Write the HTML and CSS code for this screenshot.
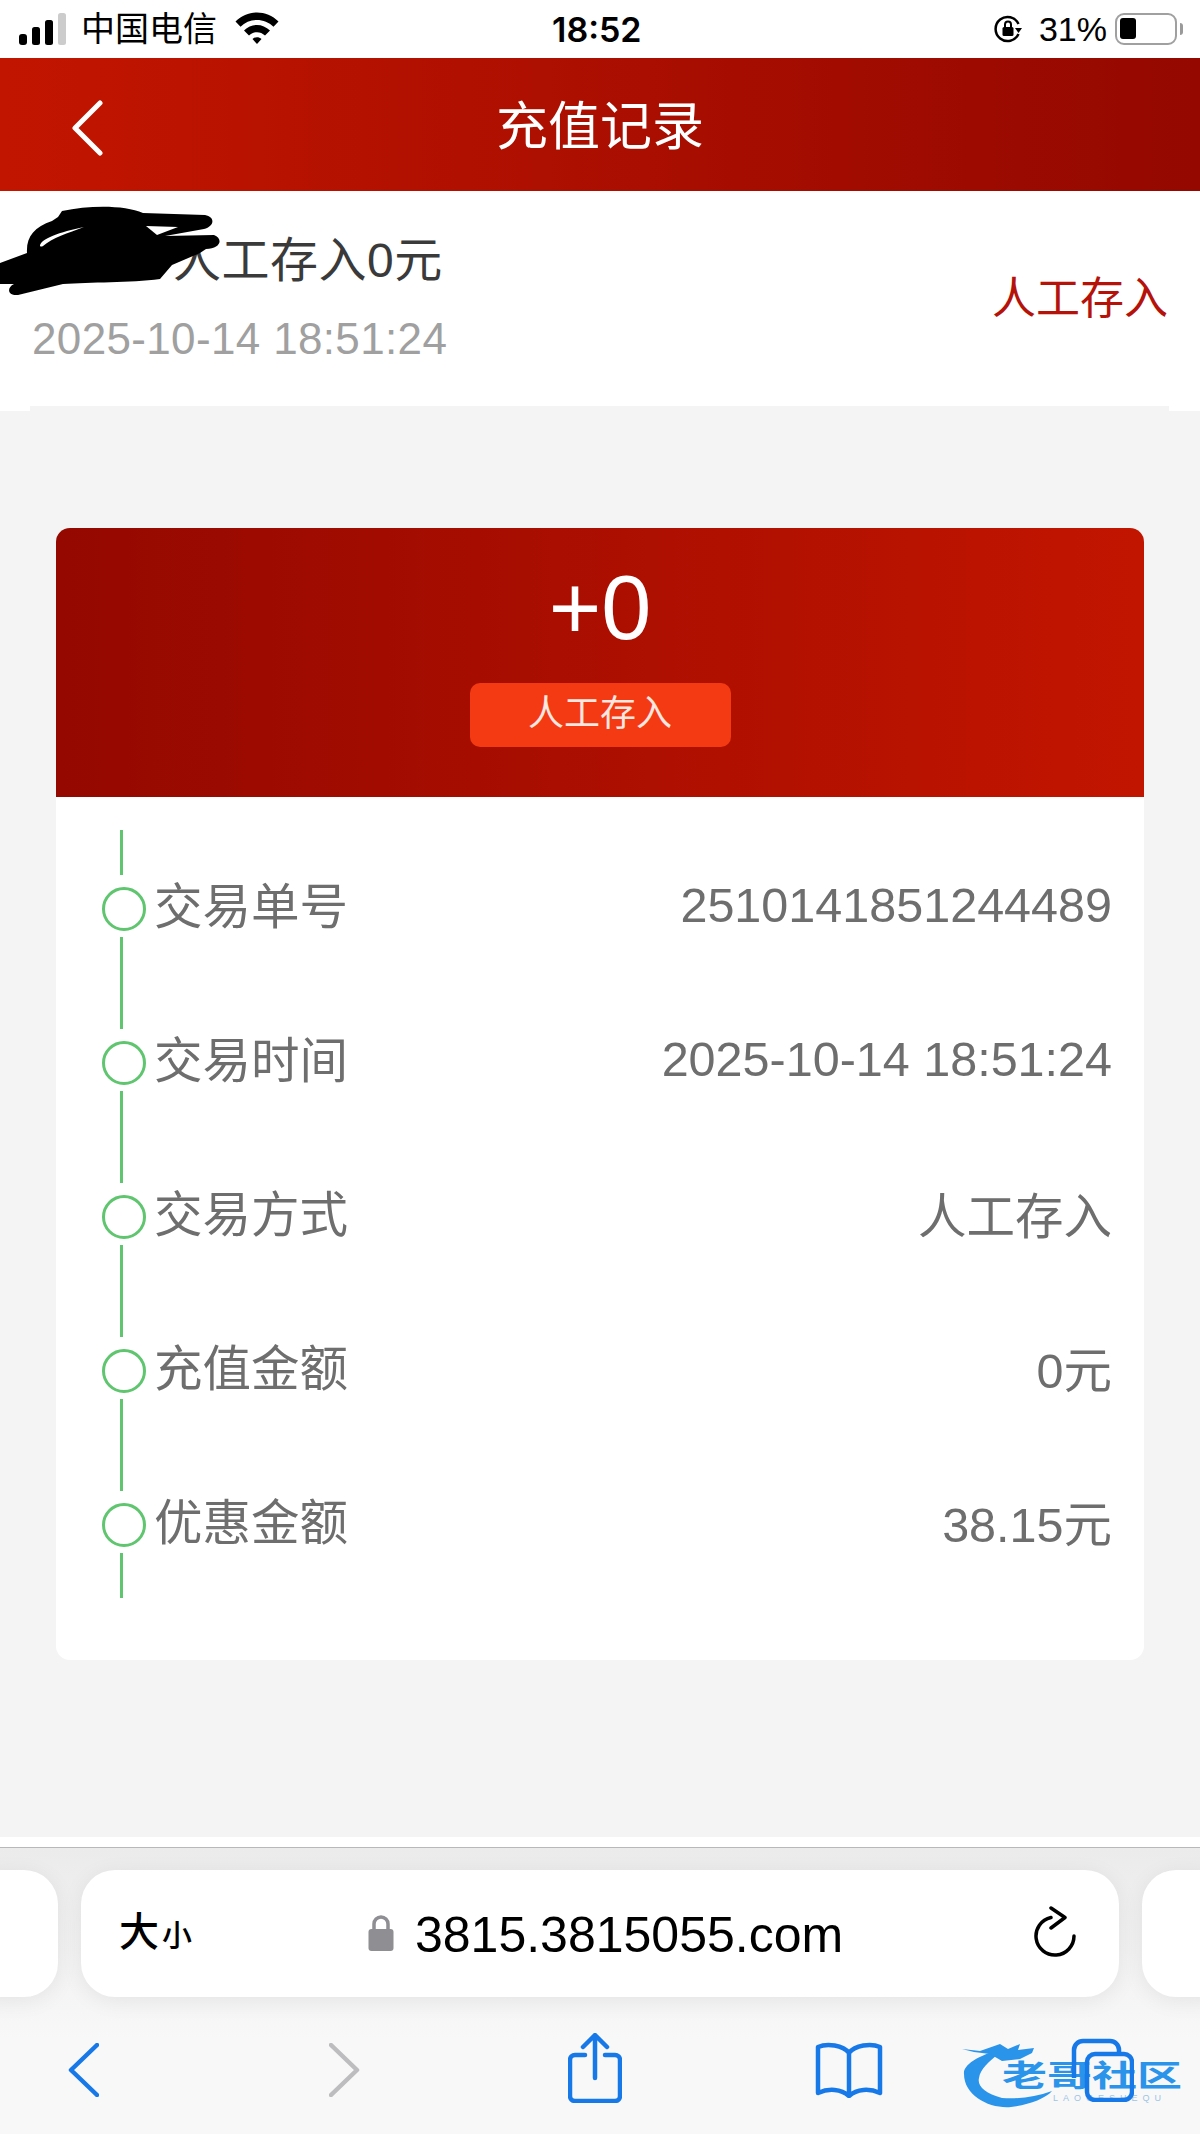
FILE: index.html

```html
<!DOCTYPE html>
<html>
<head>
    <title>充值记录</title>
    <meta http-equiv="Content-Type" content="text/html;charset=UTF-8"/>
    <link rel="stylesheet" href="styles.css">
</head>
<body>
<div class="status-bar">
    <div class="status-left">
        <svg class="signal" width="52" height="34" viewBox="0 0 52 34">
            <rect x="1" y="22" width="8" height="11" rx="3" fill="#000"/>
            <rect x="14" y="15" width="8" height="18" rx="2.500" fill="#000"/>
            <rect x="27" y="8" width="8" height="25" rx="2.500" fill="#000"/>
            <rect x="40" y="1" width="8" height="32" rx="2.500" fill="#ccc"/>
        </svg>
        <span class="carrier">中国电信</span>
        <svg class="wifi" width="44" height="32" viewBox="0 0 44 32">
            <path d="M0.500 9.500C12.500 -2.500 31.500 -2.500 43.500 9.500L38.500 14.800C29.500 5.800 14.500 5.800 5.500 14.800Z" fill="#000"/>
            <path d="M9 18.500C16.500 11 27.500 11 35 18.500L30 23.500C25.500 19 18.500 19 14 23.500Z" fill="#000"/>
            <path d="M17.500 27C20 24.500 24 24.500 26.500 27L22 32Z" fill="#000"/>
        </svg>
    </div>
    <div class="status-time">18:52</div>
    <div class="status-right">
        <svg width="30" height="30" viewBox="0 0 30 30">
            <path d="M25.500 20A12 12 0 1 1 25.500 10" fill="none" stroke="#000" stroke-width="2.500"/>
            <path d="M22 14h7l-3.500 5z" fill="#000"/>
            <rect x="9.500" y="13" width="11" height="9" rx="1.500" fill="#000"/>
            <path d="M12 13v-2.500a3 3 0 0 1 6 0V13" fill="none" stroke="#000" stroke-width="2"/>
        </svg>
        <span class="battery-text">31%</span>
        <div class="battery"><div class="battery-level"></div></div>
        <div class="battery-cap"></div>
    </div>
</div>

<div class="nav-bar">
    <svg class="nav-back" width="32" height="56" viewBox="0 0 32 56">
        <path d="M29 3L4 28L29 53" fill="none" stroke="#fff" stroke-width="5" stroke-linecap="round" stroke-linejoin="round"/>
    </svg>
    <span class="nav-title">充值记录</span>
</div>

<div class="record-row">
    <div class="record-inner">
        <div class="record-left">
            <div class="record-title"><span class="record-mark"></span>人工存入0元</div>
            <div class="record-time">2025-10-14 18:51:24</div>
        </div>
        <div class="record-type">人工存入</div>
    </div>
    <svg class="scribble" width="224" height="106" viewBox="0 0 224 106">
        <path d="M62 20C90 14 125 14 143 22L205 24C216 26 214 36 204 38L165 45L214 44C224 48 220 58 206 58L200 62L172 74L160 88C130 92 90 91 63 93L18 104C8 105 6 97 14 93L0 93L0 72L27 62C26 46 34 36 52 30L58 26Z" fill="#000"/>
        <path d="M40 55C40 48 60 41 84 36C68 42 52 47 43 55Q41 56 40 55Z" fill="#fff"/>
        <path d="M146 35L178 36L157 44Z" fill="#fff"/>
    </svg>
</div>

<div class="page-body">
    <div class="detail-card">
        <div class="detail-head">
            <div class="detail-amount">+0</div>
            <div class="detail-tag">人工存入</div>
        </div>
        <div class="detail-list">
            <div class="line-piece line-end"></div>
            <div class="detail-item">
                <div class="dot"></div>
                <span class="item-label">交易单号</span>
                <span class="item-value">2510141851244489</span>
            </div>
            <div class="line-piece"></div>
            <div class="detail-item">
                <div class="dot"></div>
                <span class="item-label">交易时间</span>
                <span class="item-value">2025-10-14 18:51:24</span>
            </div>
            <div class="line-piece"></div>
            <div class="detail-item">
                <div class="dot"></div>
                <span class="item-label">交易方式</span>
                <span class="item-value">人工存入</span>
            </div>
            <div class="line-piece"></div>
            <div class="detail-item">
                <div class="dot"></div>
                <span class="item-label">充值金额</span>
                <span class="item-value">0元</span>
            </div>
            <div class="line-piece"></div>
            <div class="detail-item">
                <div class="dot"></div>
                <span class="item-label">优惠金额</span>
                <span class="item-value">38.15元</span>
            </div>
            <div class="line-piece line-end"></div>
        </div>
    </div>
</div>

<div class="browser-bar">
    <div class="url-row">
        <div class="tab-side"></div>
        <div class="url-box">
            <div class="url-aa">大<span class="url-aa-small">小</span></div>
            <div class="url-center">
                <svg class="url-lock" width="26" height="38" viewBox="0 0 26 38">
                    <path d="M6 17V10a7 7 0 0 1 14 0v7" fill="none" stroke="#8e8e93" stroke-width="3.500"/>
                    <rect x="0.500" y="15" width="25" height="22" rx="3" fill="#8e8e93"/>
                </svg>
                <span class="url-text">3815.3815055.com</span>
            </div>
            <svg class="url-reload" width="42" height="54" viewBox="0 0 42 54">
                <path d="M17 11.500A19 19 0 1 0 40 30" fill="none" stroke="#000" stroke-width="3.500" stroke-linecap="round"/>
                <path d="M17 2L31 11.500L17 22" fill="none" stroke="#000" stroke-width="3.500" stroke-linecap="round" stroke-linejoin="round"/>
            </svg>
        </div>
        <div class="tab-side"></div>
    </div>
    <div class="watermark">
        <svg class="watermark-logo" width="100" height="72" viewBox="0 0 100 72">
            <path d="M45 7C15 15 3 25 4 33C4 55 30 68 51 66C68 64 85 58 92 50C75 56 60 58 42 57C25 52 17 45 19 37C20 28 30 20 38 13Z" fill="#2a93ea"/>
            <path d="M2 8L20 10L40 3L48 8L60 3L58 9L74 7L72 12L60 18L42 20L30 13L14 11Z" fill="#2a93ea"/>
        </svg>
        <div class="watermark-text">老哥社区</div>
        <div class="watermark-sub">LAOGESHEQU</div>
    </div>
    <div class="tool-row">
        <svg class="tool-back" width="31" height="54" viewBox="0 0 31 54">
            <path d="M29 2L3 27L29 52" fill="none" stroke="#1778e8" stroke-width="4.500" stroke-linecap="round" stroke-linejoin="round"/>
        </svg>
        <svg class="tool-forward" width="31" height="54" viewBox="0 0 31 54">
            <path d="M2 2L28 27L2 52" fill="none" stroke="#bdbdbf" stroke-width="4.500" stroke-linecap="round" stroke-linejoin="round"/>
        </svg>
        <svg class="tool-share" width="54" height="70" viewBox="0 0 54 70">
            <path d="M17 22H7a5 5 0 0 0-5 5v36a5 5 0 0 0 5 5h40a5 5 0 0 0 5-5V27a5 5 0 0 0-5-5H37" fill="none" stroke="#1778e8" stroke-width="4.500" stroke-linecap="round"/>
            <path d="M27 45V3M15 14L27 2L39 14" fill="none" stroke="#1778e8" stroke-width="4.500" stroke-linecap="round" stroke-linejoin="round"/>
        </svg>
        <svg class="tool-book" width="68" height="56" viewBox="0 0 68 56">
            <path d="M34 11C28 3 12 1 3 5V51C14 46 26 47 34 54C42 47 54 46 65 51V5C56 1 40 3 34 11ZM34 11V54" fill="none" stroke="#1778e8" stroke-width="4.500" stroke-linejoin="round"/>
        </svg>
        <svg class="tool-tabs" width="63" height="64" viewBox="0 0 63 64">
            <path d="M3 40V12a9 9 0 0 1 9-9h27a9 9 0 0 1 9 9v3" fill="none" stroke="#1778e8" stroke-width="4.500"/>
            <rect x="16" y="16" width="45" height="46" rx="8" fill="none" stroke="#1778e8" stroke-width="4.500"/>
        </svg>
    </div>
</div>
</body>
</html>
```

FILE: styles.css

```css
* {
    box-sizing: border-box;
}

html, body {
    margin: 0;
    padding: 0;
}

body {
    width: 1200px;
    height: 2134px;
    overflow: hidden;
    display: flex;
    flex-direction: column;
    background-color: #f4f4f4;
    font-family: "Liberation Sans", "Noto Sans CJK SC", sans-serif;
}

/* status bar */
.status-bar {
    height: 58px;
    flex-shrink: 0;
    background-color: #fff;
    display: flex;
    align-items: center;
    justify-content: space-between;
    padding: 0 17px 0 18px;
    position: relative;
    color: #000;
}

.status-left {
    display: flex;
    align-items: center;
}

.signal {
    margin-right: 11px;
}

.carrier {
    font-size: 34px;
    line-height: 40px;
    margin-right: 18px;
}

.wifi {
    margin-bottom: 2px;
}

.status-time {
    font-family: Inter, "Liberation Sans", sans-serif;
    font-size: 34px;
    font-weight: 600;
    position: absolute;
    left: 552px;
    top: 11px;
    line-height: 38px;
}

.status-right {
    display: flex;
    align-items: center;
}

.battery-text {
    font-size: 34px;
    margin: 0 8px 0 16px;
}

.battery {
    width: 62px;
    height: 32px;
    border: 2.500px solid #a0a0a0;
    border-radius: 9px;
    padding: 3px;
}

.battery-level {
    width: 16px;
    height: 21px;
    background-color: #000;
    border-radius: 3px;
}

.battery-cap {
    width: 3px;
    height: 12px;
    margin-left: 3px;
    background-color: #9a9a9a;
    border-radius: 0 3px 3px 0;
}

/* red title bar */
.nav-bar {
    height: 133px;
    flex-shrink: 0;
    background: linear-gradient(90deg, #c21500, #940800);
    display: flex;
    align-items: center;
    justify-content: center;
    position: relative;
}

.nav-back {
    position: absolute;
    left: 71px;
    top: 42px;
}

.nav-title {
    font-size: 52px;
    color: #fff;
    line-height: 60px;
    margin-top: 4px;
}

/* record row */
.record-row {
    height: 220px;
    flex-shrink: 0;
    background-color: #fff;
    padding: 0 31px 0 30px;
    position: relative;
}

.record-inner {
    height: 220px;
    border-bottom: 5px solid #f4f4f4;
    display: flex;
    justify-content: space-between;
    align-items: center;
    padding: 0 1px 0 2px;
}

.record-left {
    align-self: flex-start;
    display: flex;
    flex-direction: column;
}

.record-title {
    font-size: 48px;
    line-height: 60px;
    letter-spacing: 0.500px;
    color: #3a3a3a;
    display: flex;
    margin-top: 40px;
}

.record-mark {
    width: 13px;
    height: 5px;
    margin: 41px 24px 0 104px;
    background-color: #b5120a;
}

.record-time {
    font-size: 44px;
    line-height: 50px;
    letter-spacing: 0.350px;
    color: #a0a0a0;
    margin-top: 23px;
}

.record-type {
    font-size: 44px;
    color: #b5120a;
    margin-bottom: 8px;
}

.scribble {
    position: absolute;
    left: 0;
    top: 0;
}

/* detail card */
.page-body {
    flex: 1;
    padding: 117px 56px 0 56px;
}

.detail-card {
    height: 1132px;
    border-radius: 14px;
    overflow: hidden;
    background-color: #fff;
}

.detail-head {
    height: 269px;
    background: linear-gradient(90deg, #940800, #c21500);
    display: flex;
    flex-direction: column;
    align-items: center;
}

.detail-amount {
    font-size: 90px;
    line-height: 92px;
    color: #fff;
    margin-top: 34px;
}

.detail-tag {
    width: 261px;
    height: 64px;
    margin-top: 29px;
    background-color: #f43a12;
    border-radius: 10px;
    color: #fde7e0;
    font-size: 36px;
    line-height: 62px;
    text-align: center;
}

.detail-list {
    padding: 33px 32px 0 46px;
}

.line-piece {
    width: 3px;
    height: 92px;
    margin-left: 18px;
    background-color: #5fc56f;
}

.line-end {
    height: 45px;
}

.detail-item {
    height: 62px;
    display: flex;
    align-items: center;
}

.dot {
    width: 44px;
    height: 44px;
    margin-top: 6px;
    margin-right: 8px;
    border: 3px solid #5fc56f;
    border-radius: 50%;
    flex-shrink: 0;
}

.item-label {
    font-size: 48.500px;
    color: #6e6e6e;
    flex: 1;
    margin-bottom: 6px;
}

.item-value {
    font-size: 48.500px;
    color: #6e6e6e;
    margin-bottom: 2px;
}

/* safari toolbar */
.browser-bar {
    height: 287px;
    flex-shrink: 0;
    position: relative;
    background-color: #f8f8f9;
    background-image: linear-gradient(180deg, #ebebec, #f8f8f9 67%);
    box-shadow: 0 -10px 0 #fff;
    border-top: 1px solid #b8b8ba;
}

.url-row {
    display: flex;
    justify-content: space-between;
    gap: 23px;
    margin: 22px -38px 0 -38px;
    height: 127px;
}

.tab-side {
    width: 96px;
    border-radius: 34px;
    background-color: #fff;
    box-shadow: 0 4px 22px rgba(0, 0, 0, .07);
}

.url-box {
    flex: 1;
    border-radius: 34px;
    background-color: #fff;
    box-shadow: 0 4px 22px rgba(0, 0, 0, .07);
    display: flex;
    align-items: center;
    position: relative;
}

.url-aa {
    font-size: 40px;
    font-weight: 500;
    line-height: 50px;
    margin-left: 38px;
    color: #000;
}

.url-aa-small {
    font-size: 30px;
    margin-left: 3px;
}

.url-center {
    position: absolute;
    left: 287px;
    top: 42px;
    display: flex;
    align-items: center;
    gap: 21px;
}

.url-lock {
    margin-top: -4px;
}

.url-text {
    font-size: 50px;
    line-height: 46px;
    color: #000;
}

.url-reload {
    position: absolute;
    right: 43px;
    top: 36px;
}

.tool-row {
    height: 70px;
    display: flex;
    align-items: center;
    margin-top: 38px;
    padding-left: 68px;
    position: relative;
}

.tool-forward {
    margin-left: 230px;
}

.tool-share {
    margin-left: 208px;
    margin-bottom: 4px;
}

.tool-book {
    margin-left: 193px;
}

.tool-tabs {
    margin-left: 188px;
}

.watermark {
    position: absolute;
    left: 960px;
    top: 193px;
    width: 230px;
    height: 72px;
}

.watermark-logo {
    position: absolute;
    left: 0;
    top: 0;
}

.watermark-text {
    position: absolute;
    left: 42px;
    top: 20px;
    font-size: 30px;
    line-height: 30px;
    font-weight: 700;
    white-space: nowrap;
    color: #2a93ea;
    transform: scaleX(1.500);
    transform-origin: left top;
}

.watermark-sub {
    position: absolute;
    left: 93px;
    top: 52px;
    font-size: 9px;
    line-height: 10px;
    letter-spacing: 5px;
    color: #9cc4e4;
    white-space: nowrap;
}
```
